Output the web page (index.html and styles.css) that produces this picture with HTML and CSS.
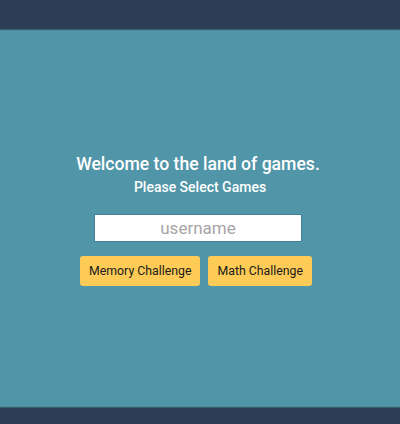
FILE: index.html
```html
<!DOCTYPE html>
<html>
<head>
<meta charset="utf-8">
<link rel="stylesheet" href="styles.css">
</head>
<body>
<header class="top"></header>
<main class="main">
  <h1 class="title">Welcome to the land of games.</h1>
  <h2 class="subtitle">Please Select Games</h2>
  <input class="username" type="text" placeholder="username">
  <div class="buttons">
    <button class="btn">Memory Challenge</button>
    <button class="btn">Math Challenge</button>
  </div>
</main>
<footer class="bottom"></footer>
</body>
</html>
```
FILE: styles.css
```css
html, body {
  margin: 0;
  padding: 0;
  height: 100%;
}
body {
  display: flex;
  flex-direction: column;
  font-family: Roboto, "Noto Sans", sans-serif;
  background: #5195a8;
}
.top {
  height: 29px;
  background: #2e3d54;
  box-shadow: 0 1px 1px rgba(0,0,0,0.35);
  position: relative;
  z-index: 1;
}
.bottom {
  height: 16px;
  background: #2e3d54;
  box-shadow: 0 -1px 1px rgba(0,0,0,0.35);
}
.main {
  flex: 1;
  display: flex;
  flex-direction: column;
  align-items: center;
  justify-content: flex-start;
  padding: 123px 4px 0 0;
}
.title {
  margin: 0;
  color: #fff;
  font-size: 17.6px;
  font-weight: 500;
  line-height: 24px;
}
.subtitle {
  margin: 1px 0 0 4px;
  color: #fff;
  font-size: 14px;
  font-weight: 500;
  line-height: 20px;
}
.username {
  margin-top: 17px;
  width: 208px;
  height: 28px;
  box-sizing: border-box;
  border: 1px solid #3f8195;
  background: #fff;
  font-family: inherit;
  font-size: 17px;
  text-align: center;
  padding: 0;
  outline: none;
}
.username::placeholder {
  color: #a5a5a5;
}
.buttons {
  display: flex;
  gap: 8px;
  margin: 14px 4px 0 0;
}
.btn {
  height: 30px;
  padding: 0 9px;
  border: none;
  border-radius: 3px;
  background: #fdcb56;
  color: #1a1a1a;
  font-family: inherit;
  font-size: 12.3px;
}
```
